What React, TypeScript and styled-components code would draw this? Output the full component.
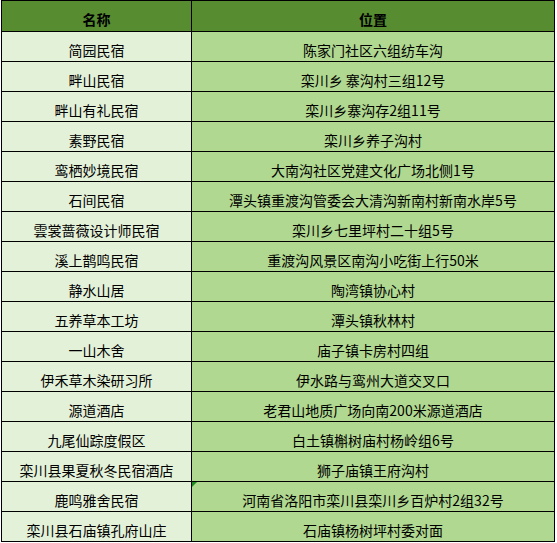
import React from "react";
import styled, { createGlobalStyle } from "styled-components";

const Global = createGlobalStyle`
  html, body { margin: 0; padding: 0; background: #ffffff; }
  body { font-family: "Noto Sans CJK SC", "Noto Sans", sans-serif; }
`;

const Sheet = styled.div`
  margin-left: 1px;
  width: 554px;
  display: grid;
  grid-template-columns: 189px 362px;
  grid-template-rows: 30px repeat(17, 29px);
  gap: 1px;
  padding: 1px;
  box-sizing: border-box;
  background: #000;
`;

const Cell = styled.div<{ $kind: "head" | "name" | "addr" }>`
  position: relative;
  display: flex;
  align-items: center;
  justify-content: center;
  box-sizing: border-box;
  padding-top: ${(p) => (p.$kind === "head" ? "5px" : "6px")};
  font-family: "Noto Sans CJK SC", sans-serif;
  font-size: 14px;
  line-height: 16px;
  white-space: nowrap;
  color: #000;
  font-weight: ${(p) => (p.$kind === "head" ? 700 : 400)};
  background: ${(p) =>
    p.$kind === "head" ? "#578C31" : p.$kind === "name" ? "#E4F1D9" : "#B0D890"};
`;

const Flag = styled.span`
  position: absolute;
  left: 0;
  top: 0;
  width: 0;
  height: 0;
  border-top: 5px solid #1f8a1f;
  border-right: 5px solid transparent;
`;

const rows: [string, string, boolean?][] = [
  ["简园民宿", "陈家门社区六组纺车沟"],
  ["畔山民宿", "栾川乡 寨沟村三组12号"],
  ["畔山有礼民宿", "栾川乡寨沟存2组11号"],
  ["素野民宿", "栾川乡养子沟村"],
  ["鸾栖妙境民宿", "大南沟社区党建文化广场北侧1号"],
  ["石间民宿", "潭头镇重渡沟管委会大清沟新南村新南水岸5号"],
  ["雲裳蔷薇设计师民宿", "栾川乡七里坪村二十组5号"],
  ["溪上鹊鸣民宿", "重渡沟风景区南沟小吃街上行50米"],
  ["静水山居", "陶湾镇协心村"],
  ["五养草本工坊", "潭头镇秋林村"],
  ["一山木舍", "庙子镇卡房村四组"],
  ["伊禾草木染研习所", "伊水路与鸾州大道交叉口"],
  ["源道酒店", "老君山地质广场向南200米源道酒店"],
  ["九尾仙踪度假区", "白土镇槲树庙村杨岭组6号"],
  ["栾川县果夏秋冬民宿酒店", "狮子庙镇王府沟村"],
  ["鹿鸣雅舍民宿", "河南省洛阳市栾川县栾川乡百炉村2组32号", true],
  ["栾川县石庙镇孔府山庄", "石庙镇杨树坪村委对面"],
];

export default function App() {
  return (
    <>
      <Global />
      <Sheet>
        <Cell $kind="head">名称</Cell>
        <Cell $kind="head">位置</Cell>
        {rows.map(([name, addr, flag]) => (
          <React.Fragment key={name}>
            <Cell $kind="name">{name}</Cell>
            <Cell $kind="addr">
              {flag && <Flag />}
              {addr}
            </Cell>
          </React.Fragment>
        ))}
      </Sheet>
    </>
  );
}
